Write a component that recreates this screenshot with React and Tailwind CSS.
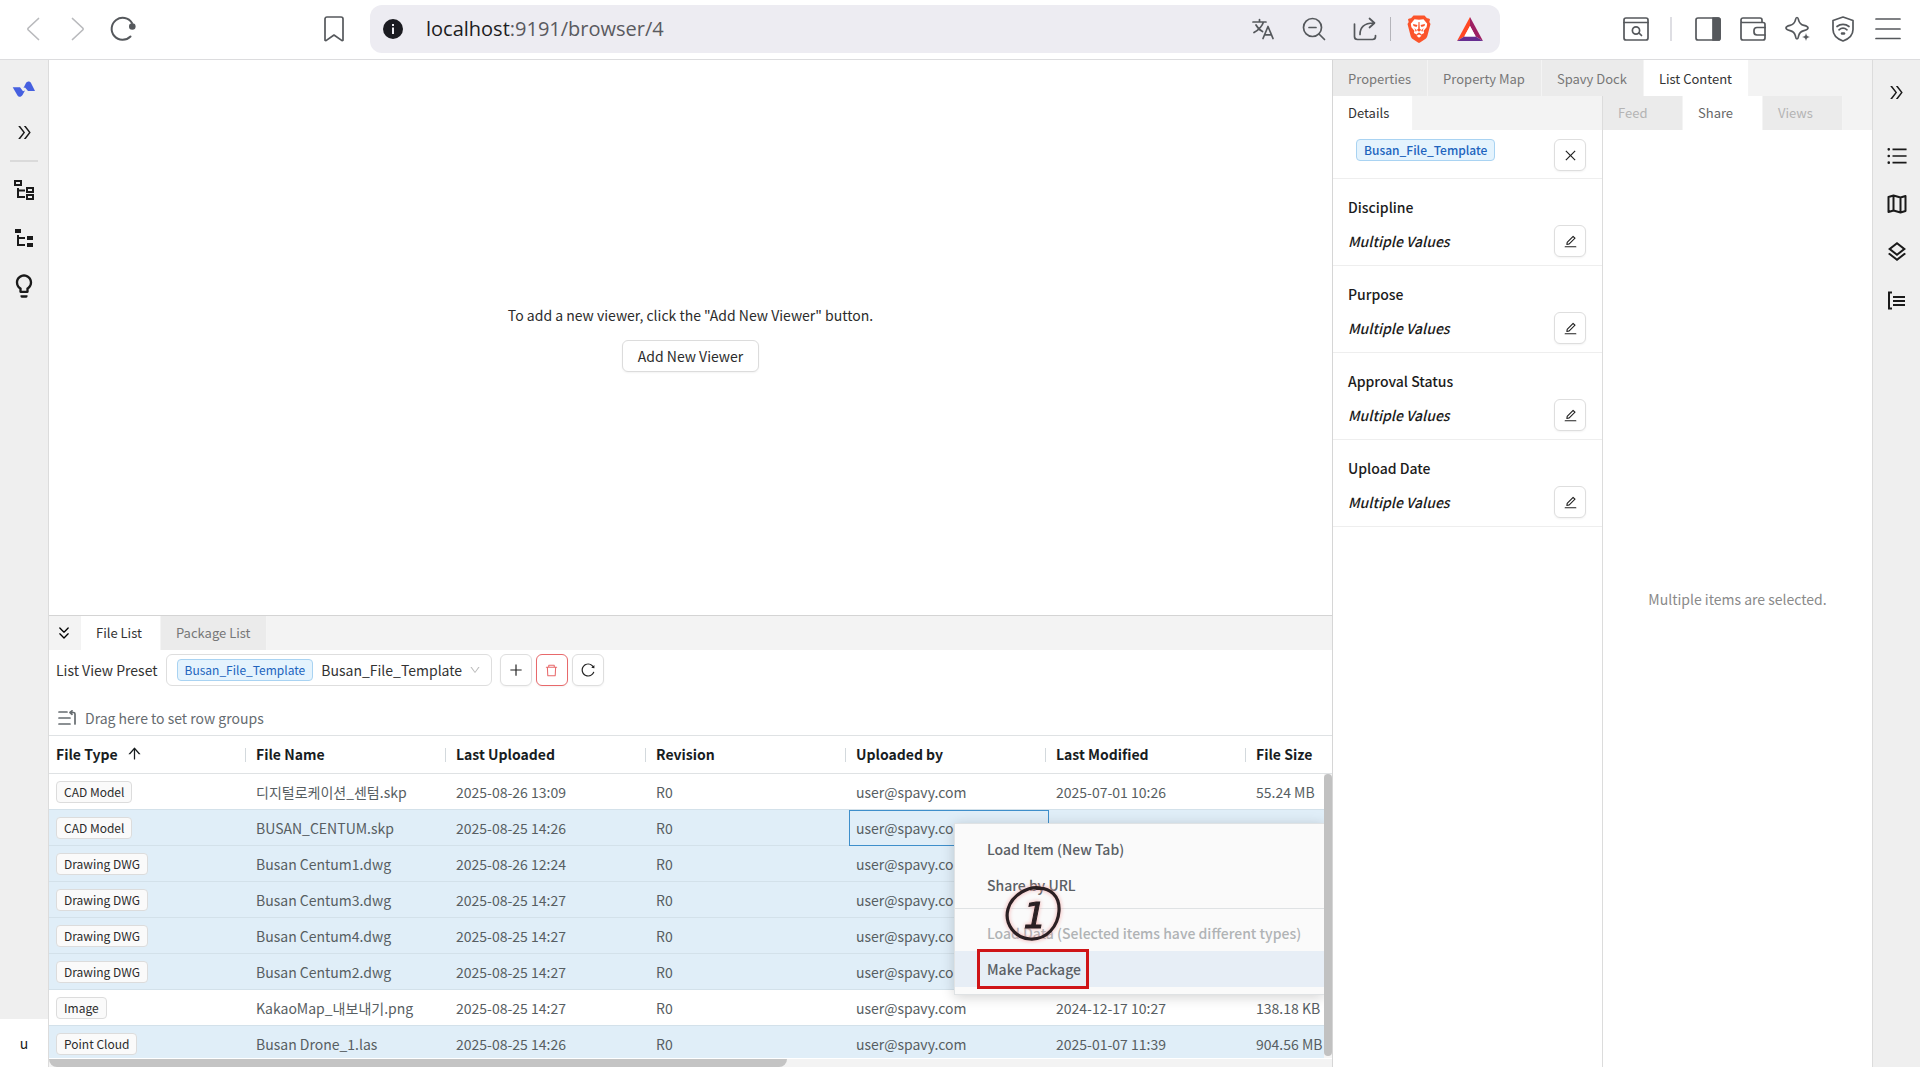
import React, { useState } from 'react';
import clsx from 'clsx';
import {
  AiOutlineArrowUp,
  AiOutlineClose,
  AiOutlineDelete,
  AiOutlineDoubleRight,
  AiOutlineDown,
  AiOutlineEdit,
  AiOutlinePlus,
  AiOutlineReload,
  AiOutlineUnorderedList,
} from 'react-icons/ai';
import { MdLightbulbOutline, MdOutlineLayers } from 'react-icons/md';
import { ChevronsDown } from 'lucide-react';

const COLUMNS = ['File Type', 'File Name', 'Last Uploaded', 'Revision', 'Uploaded by', 'Last Modified', 'File Size'];

const FILES = [
  { type: 'CAD Model', name: '디지털로케이션_센텀.skp', uploaded: '2025-08-26 13:09', modified: '2025-07-01 10:26', size: '55.24 MB' },
  { type: 'CAD Model', name: 'BUSAN_CENTUM.skp', uploaded: '2025-08-25 14:26', modified: '2025-01-07 11:39', size: '55.24 MB', selected: true, focused: true },
  { type: 'Drawing DWG', name: 'Busan Centum1.dwg', uploaded: '2025-08-26 12:24', modified: '', size: '', selected: true },
  { type: 'Drawing DWG', name: 'Busan Centum3.dwg', uploaded: '2025-08-25 14:27', modified: '', size: '', selected: true },
  { type: 'Drawing DWG', name: 'Busan Centum4.dwg', uploaded: '2025-08-25 14:27', modified: '', size: '', selected: true },
  { type: 'Drawing DWG', name: 'Busan Centum2.dwg', uploaded: '2025-08-25 14:27', modified: '', size: '', selected: true },
  { type: 'Image', name: 'KakaoMap_내보내기.png', uploaded: '2025-08-25 14:27', modified: '2024-12-17 10:27', size: '138.18 KB' },
  { type: 'Point Cloud', name: 'Busan Drone_1.las', uploaded: '2025-08-25 14:26', modified: '2025-01-07 11:39', size: '904.56 MB', selected: true },
];

const PROPERTIES = ['Discipline', 'Purpose', 'Approval Status', 'Upload Date'];

const Svg = ({ w, h, className, children }) => (
  <svg
    width={w}
    height={h}
    viewBox={`0 0 ${w} ${h}`}
    fill="none"
    stroke="currentColor"
    strokeWidth="1.7"
    strokeLinecap="round"
    strokeLinejoin="round"
    className={className}
    aria-hidden="true"
  >
    {children}
  </svg>
);

const BarButton = ({ label, className, children }) => (
  <button type="button" aria-label={label} className={clsx('flex h-12 shrink-0 items-center justify-center', className)}>
    {children}
  </button>
);

const BrowserBar = () => (
  <header className="flex h-[60px] shrink-0 items-center border-b border-[#dcdcde] bg-white text-[#55585c]">
    <nav className="flex w-[370px] shrink-0 items-center pr-[14px] pl-[11px] pb-0.5">
      <BarButton label="Back" className="w-11 text-[#b9babd]">
        <Svg w={14} h={24}><path d="M12.5 1.5 2.3 11a1.4 1.4 0 0 0 0 2l10.2 9.5" /></Svg>
      </BarButton>
      <BarButton label="Forward" className="w-[46px] text-[#b9babd]">
        <Svg w={14} h={24}><path d="M1.5 1.5 11.7 11a1.4 1.4 0 0 1 0 2L1.5 22.5" /></Svg>
      </BarButton>
      <BarButton label="Reload" className="w-11">
        <Svg w={26} h={26}>
          <path d="M20.5 20.5A11 11 0 1 1 22 7" strokeWidth="2" />
          <circle cx="22.3" cy="10.5" r="3.3" fill="currentColor" stroke="none" />
        </Svg>
      </BarButton>
      <BarButton label="Bookmark" className="ml-auto w-11">
        <Svg w={20} h={26}><path d="M3 1h14a2 2 0 0 1 2 2v21.2l-1 .4L10 19l-8 5.6-1-.4V3a2 2 0 0 1 2-2Z" /></Svg>
      </BarButton>
    </nav>

    <div className="mb-0.5 flex h-12 min-w-0 flex-1 items-center rounded-xl bg-[#edecf2] pr-[5px] pl-[13px]">
      <svg width="20" height="20" viewBox="0 0 20 20" className="shrink-0" aria-hidden="true">
        <circle cx="10" cy="10" r="10" fill="#1b1b21" />
        <rect x="9" y="5" width="2" height="2" fill="#edecf2" />
        <rect x="9" y="8.5" width="2" height="6.5" fill="#edecf2" />
      </svg>
      <div className="ml-[23px] flex-1 truncate font-['Open_Sans','Noto_Sans',sans-serif] text-[20px] leading-7 text-[#5a5a60]">
        <span className="text-[#1d1d22]">localhost</span>:9191/browser/4
      </div>
      <BarButton label="Translate" className="w-[51px]">
        <Svg w={22} h={22}>
          <path d="M1 4h13M7.5 1.500v2.500M11.500 4c-1.500 4.500-5 8-9.500 10.500M4 7c1.500 3 3.500 5 6.500 6.500M11 20.500l5-12 5 12M12.700 16.800h6.600" />
        </Svg>
      </BarButton>
      <BarButton label="Zoom out" className="w-[51px]">
        <Svg w={24} h={24}>
          <circle cx="10.500" cy="10.500" r="9" />
          <path d="m17 17 5.500 5.500M7 10.500h7" />
        </Svg>
      </BarButton>
      <BarButton label="Share" className="w-[51px]">
        <Svg w={24} h={24}>
          <path d="M1.500 7v12.500a3 3 0 0 0 3 3h15a3 3 0 0 0 3-3v-1" />
          <path d="M7 17.500c0-7 4-11.500 13.500-11.500M16.500 1.500 21.500 6l-5 4.500" />
        </Svg>
      </BarButton>
      <div className="mr-0.5 h-6 w-px bg-[#b4b4ba]" />
      <BarButton label="Brave Shields" className="w-[51px]">
        <svg width="24" height="28" viewBox="0 0 24 28" aria-hidden="true">
          <path fill="#fb542b" d="M17.500.5h-11L4 3.300C2.200 3 1 4.500 1 4.500L1.700 7 .5 9l3.200 12.200c.4 1.300 1 2 2 2.700l5.300 3.600c.7.500 1.300.5 2 0l5.300-3.600c1-.7 1.600-1.400 2-2.700L23.500 9l-1.200-2 .7-2.500S21.800 3 20 3.300Z" />
          <path fill="#fff" d="m12 4.800 4.500-.6 3.700 4.600-.6 3.400-3 3.600.5 2.200-2.800 1.400-1-1.200L12 17.500l-1.300.7-1 1.200-2.800-1.400.5-2.200-3-3.600-.6-3.400 3.700-4.600ZM12 19.500l2.500 1.300L12 22.800l-2.500-2Z" />
          <path fill="#fb542b" d="m6 9 4.500 1-1 2-3-1ZM18 9l-4.500 1 1 2 3-1ZM11.500 7h1l.3 7 1.700.8L12 16.800l-2.500-2 1.700-.8ZM7.500 13l2.500 3-1.500.5ZM16.500 13 14 16l1.500.5Z" />
        </svg>
      </BarButton>
      <BarButton label="Brave Rewards" className="w-[51px]">
        <svg width="26" height="24" viewBox="0 0 26 24" aria-hidden="true">
          <path fill="#ff4724" d="M13 0 0 24l7.300-4.600L13 9Z" />
          <path fill="#9e1f63" d="m13 0 13 24-7.300-4.600L13 9Z" />
          <path fill="#662d91" d="M0 24h26l-7.300-4.600H7.300Z" />
          <path fill="#fff" d="m13 9 5.700 10.400H7.300Z" />
        </svg>
      </BarButton>
    </div>

    <div className="flex w-[420px] shrink-0 items-center justify-end pr-[10px] pb-0.5">
      <BarButton label="Search tabs" className="mr-3 w-[45px]">
        <Svg w={26} h={24}>
          <rect x="1" y="1" width="24" height="22" rx="2" />
          <path d="M1 5.500h24M16 16l2.500 2.500" />
          <circle cx="13" cy="13.500" r="3.600" />
        </Svg>
      </BarButton>
      <div className="mr-[13px] h-6 w-0.5 bg-[#dedee3]" />
      <BarButton label="Side panel" className="w-[45px]">
        <Svg w={26} h={24}>
          <rect x="1" y="1" width="24" height="22" rx="2" />
          <path d="M18 1h5a2 2 0 0 1 2 2v18a2 2 0 0 1-2 2h-5Z" fill="currentColor" />
        </Svg>
      </BarButton>
      <BarButton label="Wallet" className="w-[45px]">
        <Svg w={26} h={24}>
          <path d="M1 4.500V21a2 2 0 0 0 2 2h20a2 2 0 0 0 2-2V7.500a2 2 0 0 0-2-2H2.500A1.500 1.500 0 0 1 1 4V3a2 2 0 0 1 2-2h17a2 2 0 0 1 2 2v2.500" />
          <path d="M25 10.500h-8a3 3 0 0 0-3 3V15a3 3 0 0 0 3 3h8" />
        </Svg>
      </BarButton>
      <BarButton label="Leo AI" className="w-[45px]">
        <Svg w={26} h={26}>
          <path d="M12 1.500c1.200 0 1.300 1.300 1.600 2.600.8 3.300 2 4.500 5.300 5.300 1.300.3 4.100.9 4.100 2.600s-2.800 2.300-4.100 2.600c-3.300.8-4.500 2-5.300 5.300-.3 1.300-.4 3.100-1.600 3.100s-1.300-1.800-1.600-3.100c-.8-3.300-2-4.500-5.300-5.300C3.800 14.300 1 13.700 1 12s2.800-2.300 4.100-2.600c3.300-.8 4.500-2 5.300-5.300.3-1.300.4-2.600 1.600-2.600Z" />
          <path d="m21 17 1.200 2.800L25 21l-2.800 1.200L21 25l-1.200-2.800L17 21l2.800-1.200Z" fill="currentColor" stroke="#fff" strokeWidth=".4" />
        </Svg>
      </BarButton>
      <BarButton label="VPN" className="w-[45px]">
        <Svg w={24} h={26}>
          <path d="m12 1 10 3.500v9c0 5.500-4.500 9.500-10 11.500-5.500-2-10-6-10-11.500v-9Z" />
          <path d="M6 10.500c3.500-2.800 8.500-2.800 12 0M8 13.800c2.400-2 5.600-2 8 0" />
          <path d="M11 17.500h2" strokeWidth="2.500" />
        </Svg>
      </BarButton>
      <BarButton label="Menu" className="w-[45px]">
        <Svg w={26} h={24}><path d="M1 2h24M1 12h24M1 21.500h24" /></Svg>
      </BarButton>
    </div>
  </header>
);

const RailButton = ({ label, className, children }) => (
  <button type="button" aria-label={label} className={clsx('flex h-12 w-full shrink-0 items-center justify-center', className)}>
    {children}
  </button>
);

const LeftRail = () => (
  <aside className="flex w-[49px] shrink-0 flex-col items-center border-r border-[#dcdcdc] bg-[#efefef] text-[#1a1a1a]">
    <a href="#home" aria-label="Home" className="mt-5 mb-2 flex h-5 w-full items-center justify-center">
      <svg width="24" height="18" viewBox="0 0 24 18" fill="#4660e0" aria-hidden="true">
        <path d="M.7 6.300H8l3 4 2-.8-2.500 4.500c-1.500 2.500-4 2-5 .5Z" />
        <path d="M11.500 7 14 2c1.500-2 4-2 5 0l4 8h-7l-3-3.500Z" />
      </svg>
    </a>
    <RailButton label="Expand">
      <AiOutlineDoubleRight size={19} />
    </RailButton>
    <hr className="mt-1 mb-1 h-px w-7 border-0 border-t-2 border-[#dadada]" />
    <RailButton label="Model tree">
      <svg width="22" height="22" viewBox="0 0 22 22" fill="none" stroke="currentColor" strokeWidth="2" aria-hidden="true">
        <path d="M2 2h6v4H2zM14 9h6v4h-6zM14 16h6v4h-6zM5 9v9h7M5 11.500h7" />
      </svg>
    </RailButton>
    <RailButton label="Folder tree">
      <svg width="20" height="20" viewBox="0 0 20 20" fill="currentColor" aria-hidden="true">
        <path d="M1 1h6v4H1zM13 8h6v4h-6zM13 15h6v4h-6z" />
        <path d="M4 7v10h7M4 10h7" fill="none" stroke="currentColor" strokeWidth="2" />
      </svg>
    </RailButton>
    <RailButton label="Ideas">
      <MdLightbulbOutline size={28} />
    </RailButton>
    <button type="button" aria-label="Account" className="mt-auto h-12 w-full bg-white text-sm">u</button>
  </aside>
);

const RightRail = () => (
  <aside className="flex w-12 shrink-0 flex-col items-center border-l border-[#dcdcdc] bg-[#efefef] pt-2 text-[#1a1a1a]">
    <RailButton label="Collapse" className="mb-4">
      <AiOutlineDoubleRight size={19} />
    </RailButton>
    <RailButton label="List">
      <AiOutlineUnorderedList size={24} />
    </RailButton>
    <RailButton label="Map">
      <Svg w={20} h={20}>
        <path d="m1.500 3 5-1.500 7 2 5-1.500v15l-5 1.500-7-2-5 1.500ZM6.500 1.500v15M13.500 3.500v15" strokeWidth="2" />
      </Svg>
    </RailButton>
    <RailButton label="Layers">
      <MdOutlineLayers size={24} />
    </RailButton>
    <RailButton label="Outline">
      <svg width="19" height="19" viewBox="0 0 19 19" fill="none" stroke="currentColor" strokeWidth="2" aria-hidden="true">
        <path d="M5 1.500H2v16h3M6 6h12M6 10h12M6 14h12" />
      </svg>
    </RailButton>
  </aside>
);

const Tab = ({ active, disabled, className, children }) => (
  <button
    type="button"
    role="tab"
    aria-selected={!!active}
    disabled={disabled}
    className={clsx(
      'h-full shrink-0 border-r border-[#f4f4f4] text-left text-[13px]',
      active ? 'bg-white text-[#333]' : 'bg-[#ebebeb]',
      !active && (disabled ? 'text-[#b4b4b4]' : 'text-[#777]'),
      className
    )}
  >
    {children}
  </button>
);

const IconButton = ({ label, danger, children }) => (
  <button
    type="button"
    aria-label={label}
    className={clsx(
      'flex size-8 shrink-0 items-center justify-center rounded-md border bg-white shadow-xs',
      danger ? 'border-[#e8696b] text-[#e8696b]' : 'border-[#dedede] text-[#222]'
    )}
  >
    {children}
  </button>
);

const TemplateTag = ({ bold }) => (
  <span
    className={clsx(
      'shrink-0 rounded border border-[#a9d3f2] bg-[#e4f3fd] px-[7px] text-xs leading-5 text-[#2063bd]',
      bold && 'font-medium'
    )}
  >
    Busan_File_Template
  </span>
);

const Viewer = () => (
  <section className="flex flex-1 flex-col items-center justify-center gap-[13px] bg-white text-sm text-[#2c2c2c]">
    <p className="leading-6">To add a new viewer, click the "Add New Viewer" button.</p>
    <button type="button" className="h-8 rounded-md border border-[#dcdcdc] bg-white px-[15px] shadow-xs">
      Add New Viewer
    </button>
  </section>
);

const FileTable = () => (
  <table className="w-[1400px] table-fixed border-separate border-spacing-0 text-left text-sm">
    <thead>
      <tr>
        {COLUMNS.map((column, i) => (
          <th
            key={column}
            scope="col"
            className="relative h-[38px] border-b border-[#dfe2e4] p-0 pb-0.5 pl-[7px] font-bold text-[#181d1f]"
          >
            <span className="flex items-center gap-2">
              {column}
              {i === 0 && <AiOutlineArrowUp size={17} />}
            </span>
            <span className="absolute top-3 right-[3px] h-3.5 w-px bg-[#d3d9dd]" />
          </th>
        ))}
      </tr>
    </thead>
    <tbody>
      {FILES.map((file) => (
        <tr key={file.name} className={clsx('text-[#575e62]', file.selected ? 'bg-[#e0eef8]' : 'bg-white')}>
          <td className="h-9 border-b border-[#d3e1ea] p-0 pl-[7px]">
            <span className="block w-fit rounded border border-[#dcdcdc] bg-[#fafafa] px-[7px] text-xs leading-5 text-[#2c2c2c]">
              {file.type}
            </span>
          </td>
          <td className="border-b border-[#d3e1ea] p-0 pl-[7px]">{file.name}</td>
          <td className="border-b border-[#d3e1ea] p-0 pl-[7px]">{file.uploaded}</td>
          <td className="border-b border-[#d3e1ea] p-0 pl-[7px]">R0</td>
          <td className={clsx('border-b border-[#d3e1ea] p-0 pl-[7px]', file.focused && 'outline -outline-offset-1 outline-[#3f8fcb]')}>
            user@spavy.com
          </td>
          <td className="border-b border-[#d3e1ea] p-0 pl-[7px]">{file.modified}</td>
          <td className="border-b border-[#d3e1ea] p-0 pl-[7px]">{file.size}</td>
        </tr>
      ))}
    </tbody>
  </table>
);

const ContextMenu = () => (
  <div
    role="menu"
    className="absolute top-[87px] left-[905px] flex w-[370px] flex-col border border-r-0 border-[#dfe2e4] bg-[#fafafa] py-[7px] text-sm font-medium text-[#5a6065] shadow-[0_2px_12px_rgba(0,0,0,0.18)]"
  >
    <button type="button" role="menuitem" className="h-9 pl-8 text-left">Load Item (New Tab)</button>
    <button type="button" role="menuitem" className="h-9 pl-8 text-left">Share by URL</button>
    <hr className="mt-[5px] mb-1.5 border-[#dfe2e4]" />
    <button type="button" role="menuitem" disabled className="h-9 truncate pl-8 text-left text-[#b0b3b5]">
      Load Data (Selected items have different types)
    </button>
    <button type="button" role="menuitem" className="relative h-9 bg-[#e7eef6] pl-8 text-left">
      Make Package
      <span className="absolute -top-0.5 left-[22px] h-10 w-28 border-[3px] border-[#cf1417]" />
    </button>
    {/* step marker */}
    <svg width="60" height="60" viewBox="0 0 60 60" fill="none" className="absolute top-[60px] left-[49px] drop-shadow-[0_0_2px_#f3a6a6]" aria-hidden="true">
      <path
        d="M38 4.500C25 1 8 11 4 25c-4 15 7 29 22 30 17 1 28-13 29-28C56 12 46 3 33 4.500"
        stroke="#2b2023"
        strokeWidth="3.200"
        strokeLinecap="round"
      />
      <text
        x="31"
        y="44"
        textAnchor="middle"
        fill="#2b2023"
        stroke="#2b2023"
        strokeWidth="1"
        className="font-['DejaVu_Sans',sans-serif] text-[36px] font-normal italic"
      >
        1
      </text>
    </svg>
  </div>
);

const FileDock = () => {
  const [preset, setPreset] = useState('Busan_File_Template');

  return (
    <section className="flex h-[452px] shrink-0 flex-col border-t border-[#d4d4d4] bg-white">
      <div role="tablist" className="flex h-[34px] shrink-0 bg-[#f3f3f3]">
        <button type="button" aria-label="Collapse list" className="flex w-8 items-center justify-center pr-0.5">
          <ChevronsDown size={20} strokeWidth={1.6} />
        </button>
        <Tab active className="w-20 pl-[15px]">File List</Tab>
        <Tab className="px-[15px]">Package List</Tab>
      </div>

      <div className="flex shrink-0 items-center gap-1 pt-1 pb-4 pl-[7px] text-sm text-[#333]">
        <label htmlFor="preset" className="mr-1">List View Preset</label>
        <div className="mr-1 flex h-8 w-[326px] items-center gap-2 rounded-md border border-[#dedede] px-[10px]">
          <TemplateTag />
          <select
            id="preset"
            value={preset}
            onChange={(e) => setPreset(e.target.value)}
            className="min-w-0 flex-1 appearance-none bg-transparent outline-none"
          >
            <option>Busan_File_Template</option>
          </select>
          <AiOutlineDown size={12} className="-ml-2 shrink-0 text-[#bbb]" />
        </div>
        <IconButton label="Add preset"><AiOutlinePlus size={16} /></IconButton>
        <IconButton label="Delete preset" danger><AiOutlineDelete size={15} /></IconButton>
        <IconButton label="Reload preset"><AiOutlineReload size={16} /></IconButton>
      </div>

      <div className="flex h-[33px] shrink-0 items-center gap-2 pb-0.5 pl-[9px] text-sm text-[#666c70]">
        <Svg w={19} h={16}>
          <path d="M1 2h8M1 8h11M1 14h11M17 14V4a1.500 1.500 0 0 0-1.500-1.500H12M14 .8 12 2.500l2 1.800" />
        </Svg>
        Drag here to set row groups
      </div>

      <div className="relative min-h-0 flex-1 overflow-hidden border-t border-[#dfe2e4]">
        <FileTable />
        <ContextMenu />
        <div className="absolute top-[38px] right-0 bottom-0 w-2 bg-[#f5f5f5]">
          <div className="h-[282px] rounded-full bg-[#c1c1c1]" />
        </div>
      </div>
      <div className="h-[9px] shrink-0 border-t border-white bg-[#f3f3f3]">
        <div className="h-2 w-[738px] rounded-b-lg bg-[#c4c4c4]" />
      </div>
    </section>
  );
};

const DetailsPanel = () => (
  <div className="flex w-[270px] shrink-0 flex-col border-r border-[#dcdcdc]">
    <div role="tablist" className="flex h-[34px] bg-[#f3f3f3]">
      <Tab active className="w-20 pl-[15px]">Details</Tab>
    </div>
    <div className="flex h-[49px] items-start justify-between border-b border-[#eee] pt-[9px] pr-4 pl-[23px]">
      <div className="flex"><TemplateTag bold /></div>
      <IconButton label="Close"><AiOutlineClose size={15} /></IconButton>
    </div>
    {PROPERTIES.map((property) => (
      <div key={property} className="h-[87px] border-b border-[#eee] pt-4 pr-4 pl-[15px] text-sm font-medium text-[#1c1c1c]">
        <h3 className="leading-6">{property}</h3>
        <div className="mt-1.5 flex items-center justify-between">
          <span className="italic">Multiple Values</span>
          <IconButton label={`Edit ${property}`}><AiOutlineEdit size={15} /></IconButton>
        </div>
      </div>
    ))}
  </div>
);

const SidePanel = () => (
  <section className="flex w-[540px] shrink-0 flex-col border-l border-[#d6d6d6] bg-white">
    <div role="tablist" className="flex h-9 shrink-0 bg-[#f3f3f3]">
      <Tab className="pt-0.5 pr-4 pl-[15px]">Properties</Tab>
      <Tab className="pt-0.5 pr-4 pl-[15px]">Property Map</Tab>
      <Tab className="pt-0.5 pr-4 pl-[15px]">Spavy Dock</Tab>
      <Tab active className="pt-0.5 pr-4 pl-[15px]">List Content</Tab>
    </div>
    <div className="flex min-h-0 flex-1">
      <DetailsPanel />
      <div className="flex min-w-0 flex-1 flex-col">
        <div role="tablist" className="flex h-[34px] shrink-0 bg-[#f3f3f3]">
          <Tab disabled className="w-20 pl-[15px]">Feed</Tab>
          <Tab active className="w-20 pl-[15px] text-[#666]!">Share</Tab>
          <Tab disabled className="w-20 pl-[15px]">Views</Tab>
        </div>
        <p className="flex flex-1 items-center justify-center text-sm text-[#8a8a8a]">Multiple items are selected.</p>
      </div>
    </div>
  </section>
);

const App = () => (
  <div className="flex h-screen flex-col overflow-hidden bg-white font-['Noto_Sans_CJK_KR','Noto_Sans',sans-serif]">
    <BrowserBar />
    <div className="flex min-h-0 flex-1">
      <LeftRail />
      <main className="flex min-w-0 flex-1 flex-col">
        <Viewer />
        <FileDock />
      </main>
      <SidePanel />
      <RightRail />
    </div>
  </div>
);

export default App;
